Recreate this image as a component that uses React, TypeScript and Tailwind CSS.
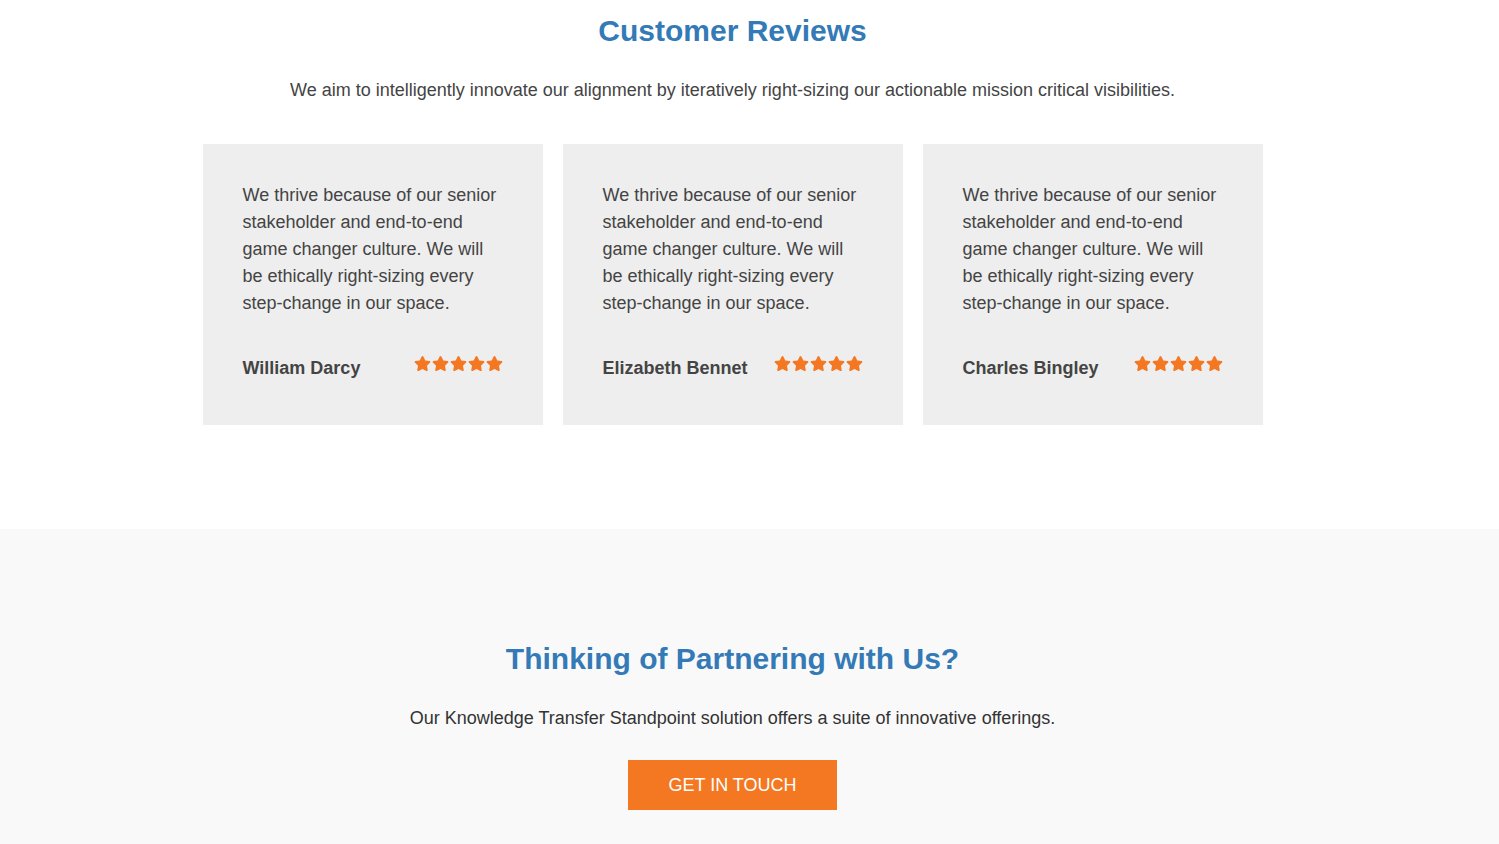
import React from 'react';
import { FaStar } from 'react-icons/fa';

interface Review {
  name: string;
  text: string;
}

const REVIEW_TEXT =
  'We thrive because of our senior stakeholder and end-to-end game changer culture. We will be ethically right-sizing every step-change in our space.';

const reviews: Array<Review> = [
  { name: 'William Darcy', text: REVIEW_TEXT },
  { name: 'Elizabeth Bennet', text: REVIEW_TEXT },
  { name: 'Charles Bingley', text: REVIEW_TEXT },
];

function Stars() {
  return (
    <div className="flex gap-[1px] text-[#f47721] -mt-[10px]">
      {[0, 1, 2, 3, 4].map((i) => (
        <FaStar key={`star ${i}`} size={17} />
      ))}
    </div>
  );
}

const ReviewCard: React.FC<Review> = ({ name, text }) => (
  <div className="w-[340px] h-[281px] bg-[#eeeeee] px-[40px] pt-[38px]">
    <p className="text-[18px] leading-[27px] text-[#444] pr-[2px]">{text}</p>
    <div className="flex items-center justify-between mt-[38px]">
      <h4 className="text-[18px] leading-[27px] font-bold text-[#444]">{name}</h4>
      <Stars />
    </div>
  </div>
);

export default function App() {
  return (
    <div className="w-full min-h-screen bg-white" style={{ fontFamily: '"Liberation Sans", Arial, sans-serif' }}>
      <section className="pt-[13px] pb-[104px] pr-[34px]">
        <h2 className="text-center text-[30px] leading-[36px] font-bold text-[#337ab7]">Customer Reviews</h2>
        <p className="text-center text-[18px] leading-[27px] text-[#444] mt-[28px]">
          We aim to intelligently innovate our alignment by iteratively right-sizing our actionable mission critical visibilities.
        </p>
        <div className="flex justify-center gap-[20px] mt-[40px]">
          {reviews.map((r) => (
            <ReviewCard key={r.name} {...r} />
          ))}
        </div>
      </section>
      <section className="bg-[#f9f9f9] pt-[112px] pb-[40px] pr-[34px]">
        <h2 className="text-center text-[30px] leading-[36px] font-bold text-[#337ab7]">Thinking of Partnering with Us?</h2>
        <p className="text-center text-[18px] leading-[27px] text-[#333] mt-[28px]">
          Our Knowledge Transfer Standpoint solution offers a suite of innovative offerings.
        </p>
        <div className="flex justify-center mt-[28px]">
          <button className="w-[209px] h-[50px] bg-[#f47721] text-white text-[18px] uppercase">Get in touch</button>
        </div>
      </section>
    </div>
  );
}
